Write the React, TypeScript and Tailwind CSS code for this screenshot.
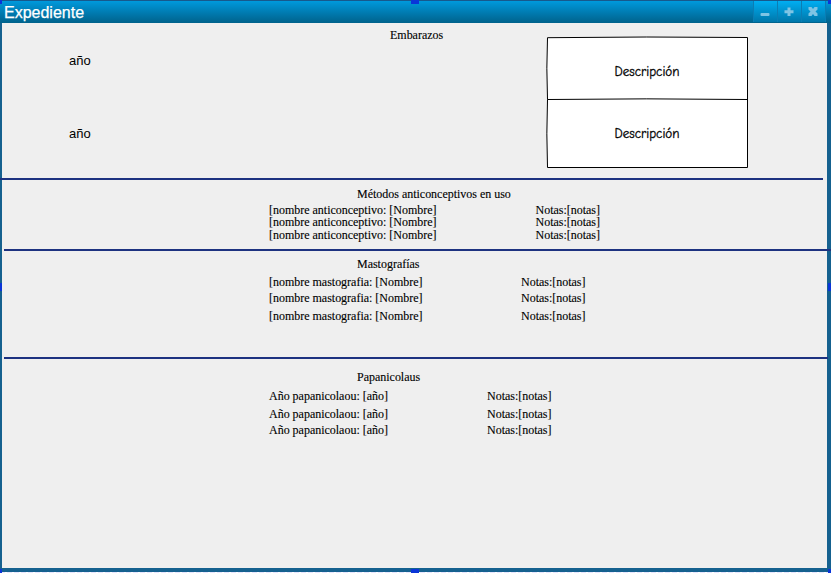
import React from "react";

const serif = "font-['Liberation_Serif',serif] text-[12px] whitespace-nowrap text-black [-webkit-text-stroke:0.12px_black] tracking-[-0.015px]";

type RecordRowProps = { label: string; gap: string; labelWidth: string };

function RecordRow({ label, gap, labelWidth }: RecordRowProps) {
  return (
    <div className={`flex pl-[267px] h-[12px] leading-[12px] ${gap} ${serif}`}>
      <span className={`shrink-0 ${labelWidth}`}>{label}</span>
      <span>Notas:[notas]</span>
    </div>
  );
}

function WindowButton({ children }: { children: React.ReactNode }) {
  return (
    <div className="flex h-[21px] w-[24px] items-center justify-center border-l border-[#0b7db4] bg-linear-to-b from-[#00aef2] to-[#0077aa] pr-[2px]">
      <svg width="10" height="10" viewBox="0 0 10 10" fill="#7fc4e4">
        {children}
      </svg>
    </div>
  );
}

function Handle({ place }: { place: string }) {
  return <div className={`absolute bg-[#0a35d8] ${place}`} />;
}

export default function App() {
  return (
    <div className="relative flex h-[573px] w-[831px] flex-col overflow-hidden bg-[#15618f]">
      <header className="flex h-[23px] shrink-0 items-start justify-between border-t border-[#17598c] bg-linear-to-b from-[#0099dc] to-[#00628c] pl-1">
        <h1 className="pt-px font-['Liberation_Sans',sans-serif] text-[16px] leading-[22px] text-white [-webkit-text-stroke:0.25px_white]">Expediente</h1>
        <div className="mr-[5px] flex border-r border-[#0b7db4]">
          <WindowButton>
            <rect x="0.5" y="6" width="9" height="3" rx="1" />
          </WindowButton>
          <WindowButton>
            <path d="M3.5 0.500h3v2.700h3v3h-3v2.800h-3V6.200h-3v-3h3z" />
          </WindowButton>
          <WindowButton>
            <path d="M0.500 0h3L5 2l1.500-2h3v2.500L7.500 4.500l2 2V9h-3L5 7l-1.500 2h-3V6.500l2-2-2-2z" />
          </WindowButton>
        </div>
      </header>

      <main className="ml-[2px] mr-[4px] flex h-[545px] shrink-0 flex-col bg-[#efefef]">
        <section className="flex h-[155px] shrink-0">
          <div className="w-[388px] pl-[67px] pt-[30px] font-['Liberation_Sans',sans-serif] text-[13px] leading-[16px] text-black">
            <div>año</div>
            <div className="mt-[57px]">año</div>
          </div>
          <h2 className={`w-[156px] pt-[5px] leading-[14px] ${serif}`}>Embarazos</h2>
          <svg className="mt-[13px] shrink-0" width="204" height="134" viewBox="0 0 204 134">
            <path d="M1.500 1.700Q100 0.400 201.500 1.500V131.500H1.500Q0.200 98 1.500 63.500Q0.200 32 1.500 1.700Z" fill="white" stroke="black" />
            <path d="M1.500 63.500Q100 62.200 201.500 63.500" fill="none" stroke="black" />
            <g className="font-['Comic_Sans_MS','Comic_Neue','Open_Sans',sans-serif] text-[13px]" textAnchor="middle" stroke="black" strokeWidth="0.3">
              <text x="101" y="40" textLength="65" lengthAdjust="spacingAndGlyphs">Descripción</text>
              <text x="101" y="102" textLength="65" lengthAdjust="spacingAndGlyphs">Descripción</text>
            </g>
          </svg>
        </section>

        <div className="-ml-[2px] h-[2px] w-[823px] shrink-0 bg-[#1d3280]" />

        <section className="h-[69px] shrink-0 pt-[7px]">
          <h2 className={`pl-[355px] leading-[14px] ${serif}`}>Métodos anticonceptivos en uso</h2>
          <RecordRow label="[nombre anticonceptivo: [Nombre]" gap="mt-[3px]" labelWidth="w-[266.500px]" />
          <RecordRow label="[nombre anticonceptivo: [Nombre]" gap="mt-0" labelWidth="w-[266.500px]" />
          <RecordRow label="[nombre anticonceptivo: [Nombre]" gap="mt-px" labelWidth="w-[266.500px]" />
        </section>

        <div className="ml-[2px] h-[2px] w-[827px] shrink-0 bg-[#1d3280]" />

        <section className="h-[106px] shrink-0 pt-[6px]">
          <h2 className={`pl-[355px] leading-[14px] ${serif}`}>Mastografías</h2>
          <RecordRow label="[nombre mastografia: [Nombre]" gap="mt-[5px]" labelWidth="w-[252px]" />
          <RecordRow label="[nombre mastografia: [Nombre]" gap="mt-[4px]" labelWidth="w-[252px]" />
          <RecordRow label="[nombre mastografia: [Nombre]" gap="mt-[6px]" labelWidth="w-[252px]" />
        </section>

        <div className="ml-[2px] h-[2px] w-[824px] shrink-0 bg-[#1d3280]" />

        <section className="pt-[11px]">
          <h2 className={`pl-[355px] leading-[14px] ${serif}`}>Papanicolaus</h2>
          <RecordRow label="Año papanicolaou: [año]" gap="mt-[6px]" labelWidth="w-[218px]" />
          <RecordRow label="Año papanicolaou: [año]" gap="mt-[6px]" labelWidth="w-[218px]" />
          <RecordRow label="Año papanicolaou: [año]" gap="mt-[4px]" labelWidth="w-[218px]" />
        </section>
      </main>

      <div className="mt-[4px] h-px shrink-0 bg-[repeating-linear-gradient(90deg,#e8e6ff_0px,#e8e6ff_5px,#ffffff_5px,#ffffff_7px)]" />

      <Handle place="left-0 top-0 h-[4px] w-[2px]" />
      <Handle place="left-[411px] top-0 h-[4px] w-[8px]" />
      <Handle place="right-0 top-0 h-[4px] w-[3px]" />
      <Handle place="left-0 top-[283px] h-[8px] w-[2px]" />
      <Handle place="right-0 top-[283px] h-[8px] w-[3px]" />
      <Handle place="left-0 bottom-0 h-[4px] w-[2px]" />
      <Handle place="left-[411px] bottom-0 h-[4px] w-[8px]" />
      <Handle place="right-0 bottom-0 h-[4px] w-[3px]" />
    </div>
  );
}
